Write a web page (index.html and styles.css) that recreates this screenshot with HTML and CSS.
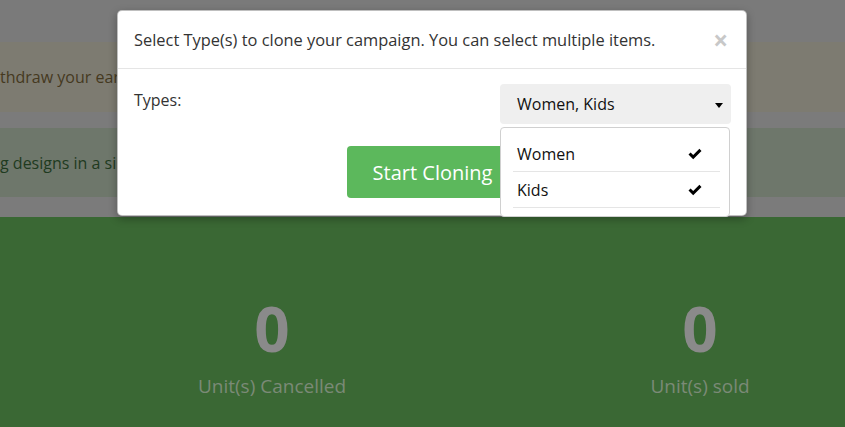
FILE: index.html
```html
<!DOCTYPE html>
<html>
<head>
<meta charset="utf-8">
<link rel="stylesheet" href="styles.css">
</head>
<body>
<div class="page">
  <div class="top">
    <div class="topbar"></div>
    <div class="alert alert-warn">thdraw your earnings anytime from your dashboard.</div>
    <div class="spacer"></div>
    <div class="alert alert-ok">g designs in a single campaign to reach more buyers.</div>
    <div class="spacer2"></div>
  </div>
  <div class="stats">
    <div class="stat">
      <div class="num">0</div>
      <div class="label">Unit(s) Cancelled</div>
    </div>
    <div class="stat">
      <div class="num">0</div>
      <div class="label">Unit(s) sold</div>
    </div>
  </div>

  <div class="modal">
    <div class="modal-header">
      <span class="modal-title">Select Type(s) to clone your campaign. You can select multiple items.</span>
      <span class="close">&times;</span>
    </div>
    <div class="modal-body">
      <div class="field">
        <span class="field-label">Types:</span>
        <div class="select-wrap">
          <div class="select">
            <span>Women, Kids</span>
            <span class="caret"></span>
          </div>
          <ul class="menu">
            <li class="item"><span>Women</span>
              <svg class="check" viewBox="0 0 16 14" width="16" height="14"><path d="M1.5 7.5 L3.6 5.4 L6.2 8 L12.4 1.8 L14.5 3.9 L6.2 12.2 Z" fill="#000"/></svg>
            </li>
            <li class="item"><span>Kids</span>
              <svg class="check" viewBox="0 0 16 14" width="16" height="14"><path d="M1.5 7.5 L3.6 5.4 L6.2 8 L12.4 1.8 L14.5 3.9 L6.2 12.2 Z" fill="#000"/></svg>
            </li>
          </ul>
        </div>
      </div>
      <div class="actions">
        <button class="btn">Start Cloning</button>
      </div>
    </div>
  </div>
</div>
</body>
</html>
```

FILE: styles.css
```css
* { box-sizing: border-box; }
html, body { margin: 0; padding: 0; }
body {
  width: 845px;
  height: 427px;
  overflow: hidden;
  font-family: "Open Sans", "Noto Sans", sans-serif;
  background: #7b7b7b;
}
.page { position: relative; width: 845px; height: 427px; }
.top { height: 217px; background: #7b7b7b; }
.topbar { height: 42px; background: #7a7a7a; }
.alert {
  height: 70px;
  font-size: 16px;
  line-height: 70px;
  white-space: nowrap;
  overflow: hidden;
}
.alert-warn { background: #7d7b71; color: #45391f; height: 70px; }
.spacer { height: 16px; }
.alert-ok { background: #6e776b; color: #1f3b1f; height: 69px; }
.spacer2 { height: 20px; }

.stats {
  height: 210px;
  background: #3a6834;
  display: flex;
  padding-left: 172px;
  gap: 228px;
  padding-top: 75px;
}
.stat { width: 200px; text-align: center; }
.num {
  font-size: 62px;
  font-weight: 700;
  color: #8a8a8a;
  line-height: 72px;
}
.label {
  font-size: 19px;
  color: #7b8a77;
  margin-top: 9px;
}

.modal {
  position: absolute;
  left: 117px;
  top: 10px;
  width: 630px;
  height: 206px;
  background: #fff;
  border: 1px solid rgba(0,0,0,.25);
  border-radius: 5px;
  box-shadow: 0 3px 9px rgba(0,0,0,.3);
}
.modal-header {
  display: flex;
  justify-content: space-between;
  align-items: center;
  padding: 15px 16px 15px 16px;
  height: 58px;
  border-bottom: 1px solid #e5e5e5;
}
.modal-title { font-size: 16.4px; color: #333; }
.close {
  font-size: 26px;
  font-weight: 700;
  color: #c8c8c8;
  line-height: 1;
  margin-right: 2px;
}
.modal-body { padding: 15px 15px 15px 16px; }
.field { display: flex; justify-content: space-between; align-items: flex-start; }
.field-label { font-size: 16px; color: #333; padding-top: 5px; }
.select-wrap { position: relative; width: 231px; }
.select {
  height: 40px;
  background: #efefef;
  border-radius: 4px;
  display: flex;
  align-items: center;
  justify-content: space-between;
  padding: 0 8px 0 17px;
  font-size: 16px;
  color: #111;
}
.caret {
  width: 0; height: 0;
  border-left: 4.5px solid transparent;
  border-right: 4.5px solid transparent;
  border-top: 5px solid #000;
  margin-top: 2px;
}
.menu {
  position: absolute;
  left: 0;
  top: 43px;
  width: 230px;
  margin: 0;
  padding: 8px 9px 8px 12px;
  list-style: none;
  background: #fff;
  border: 1px solid #d0d0d0;
  border-radius: 4px;
  z-index: 2;
}
.item {
  height: 36px;
  display: flex;
  align-items: center;
  justify-content: space-between;
  padding: 0 17px 0 4px;
  border-bottom: 1px solid #e5e5e5;
  font-size: 16px;
  color: #111;
}
.actions { display: flex; justify-content: center; padding-top: 22px; }
.btn {
  height: 52px;
  padding: 0 26px;
  background: #5cb85c;
  color: #fff;
  border: none;
  border-radius: 4px;
  font-family: inherit;
  font-size: 20px;
}
```
